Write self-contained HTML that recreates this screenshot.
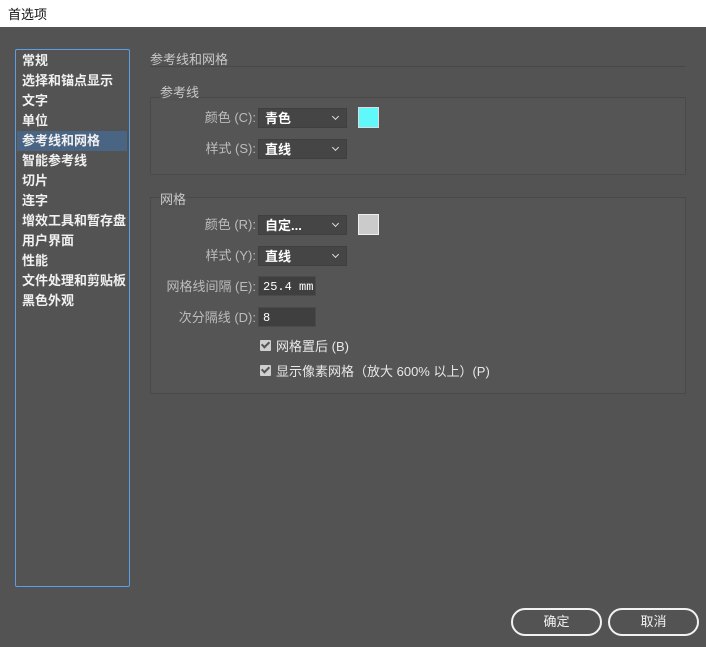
<!DOCTYPE html><html><head><meta charset="utf-8"><style>
body{margin:0;width:706px;height:647px;background:#535353;font-family:"Liberation Sans","Noto Sans CJK SC",sans-serif;font-size:13px;color:#d8d8d8;position:relative;overflow:hidden}
.a{position:absolute;white-space:nowrap}
.title{left:0;top:0;width:706px;height:27px;background:#fff;color:#111;font-size:13px}
.side{left:15px;top:49px;width:113px;height:536px;border:1px solid #5b9de6;border-radius:2px}
.it{position:absolute;left:6px;color:#f0f0f0;font-weight:bold;height:20px;line-height:20px}
.sel{left:1px!important;width:105px;padding-left:5px;background:#4a6484}
.box{border:1px solid #4a4a4a;border-top-color:#494949;background:#555}
.dd{background:#454545;border:1px solid #3f3f3f;height:20px;line-height:20px;color:#fff;font-weight:bold;padding-left:6px;box-sizing:border-box}
.dd:after{content:"";position:absolute;right:8px;top:5px;width:4px;height:4px;border-right:1.5px solid #ddd;border-bottom:1.5px solid #ddd;transform:rotate(45deg)}
.lab{color:#bcbcbc;text-align:right;width:150px;line-height:20px}
.inp{background:#3f3f3f;border:1px solid #4a4a4a;height:20px;line-height:20px;color:#fff;padding-left:4px;box-sizing:border-box;font-family:"Liberation Mono","Noto Sans CJK SC",monospace;font-size:12px}
.cb{width:11px;height:11px;background:#cfcfcf;border-radius:1px}
.cb:after{content:"";position:absolute;left:3px;top:0px;width:3px;height:6px;border-right:2px solid #555;border-bottom:2px solid #555;transform:rotate(45deg)}
.btn{border:2px solid #f2f2f2;border-radius:14px;height:24px;line-height:24px;text-align:center;color:#f2f2f2;width:87px}
</style></head><body>
<div class="a title"><span style="position:absolute;left:8px;top:4px">首选项</span></div>
<div class="a side">
<div class="it" style="top:1px">常规</div>
<div class="it" style="top:21px">选择和锚点显示</div>
<div class="it" style="top:41px">文字</div>
<div class="it" style="top:61px">单位</div>
<div class="it sel" style="top:81px">参考线和网格</div>
<div class="it" style="top:101px">智能参考线</div>
<div class="it" style="top:121px">切片</div>
<div class="it" style="top:141px">连字</div>
<div class="it" style="top:161px">增效工具和暂存盘</div>
<div class="it" style="top:181px">用户界面</div>
<div class="it" style="top:201px">性能</div>
<div class="it" style="top:221px">文件处理和剪贴板</div>
<div class="it" style="top:241px">黑色外观</div>
</div>
<div class="a" style="left:150px;top:49px;color:#c8c8c8">参考线和网格</div>
<div class="a" style="left:150px;top:66px;width:535px;height:1px;background:#474747"></div>
<div class="a box" style="left:150px;top:97px;width:534px;height:76px"></div>
<div class="a" style="left:160px;top:82px;color:#c8c8c8;background:#535353">参考线</div>
<div class="a lab" style="left:106px;top:108px">颜色 (C):</div>
<div class="a dd" style="left:258px;top:108px;width:89px">青色</div>
<div class="a" style="left:358px;top:107px;width:19px;height:19px;background:#5ff8fb;border:1px solid #ddd"></div>
<div class="a lab" style="left:106px;top:139px">样式 (S):</div>
<div class="a dd" style="left:258px;top:139px;width:89px">直线</div>
<div class="a box" style="left:150px;top:197px;width:534px;height:195px"></div>
<div class="a" style="left:160px;top:189px;color:#c8c8c8;background:#535353">网格</div>
<div class="a lab" style="left:106px;top:215px">颜色 (R):</div>
<div class="a dd" style="left:258px;top:215px;width:89px">自定...</div>
<div class="a" style="left:358px;top:214px;width:19px;height:19px;background:#cbcbcb;border:1px solid #eee"></div>
<div class="a lab" style="left:106px;top:246px">样式 (Y):</div>
<div class="a dd" style="left:258px;top:246px;width:89px">直线</div>
<div class="a lab" style="left:106px;top:277px">网格线间隔 (E):</div>
<div class="a inp" style="left:258px;top:276px;width:58px">25.4 mm</div>
<div class="a lab" style="left:106px;top:308px">次分隔线 (D):</div>
<div class="a inp" style="left:258px;top:307px;width:58px">8</div>
<div class="a cb" style="left:260px;top:340px"></div>
<div class="a" style="left:276px;top:336px;color:#e8e8e8">网格置后 (B)</div>
<div class="a cb" style="left:260px;top:365px"></div>
<div class="a" style="left:276px;top:361px;color:#e8e8e8">显示像素网格（放大 600% 以上）(P)</div>
<div class="a btn" style="left:511px;top:608px">确定</div>
<div class="a btn" style="left:608px;top:608px">取消</div>
</body></html>
